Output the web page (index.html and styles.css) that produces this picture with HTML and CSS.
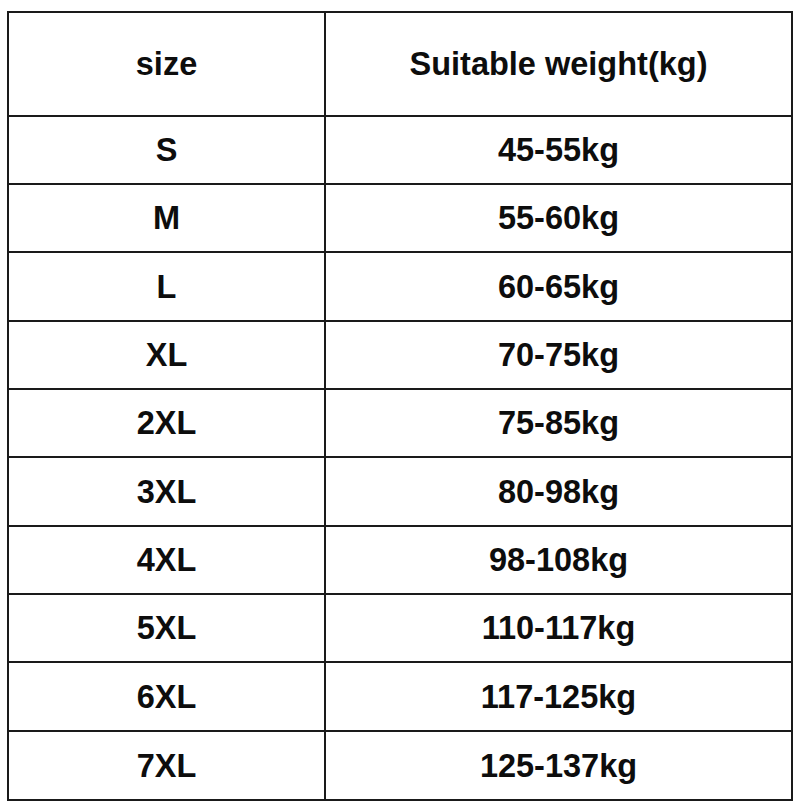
FILE: index.html
```html
<!DOCTYPE html>
<html>
<head>
<meta charset="utf-8">
<link rel="stylesheet" href="styles.css">
</head>
<body>
<div class="chart">
  <div class="cell head">size</div><div class="cell head">Suitable weight(kg)</div>
  <div class="cell">S</div><div class="cell">45-55kg</div>
  <div class="cell">M</div><div class="cell">55-60kg</div>
  <div class="cell">L</div><div class="cell">60-65kg</div>
  <div class="cell">XL</div><div class="cell">70-75kg</div>
  <div class="cell">2XL</div><div class="cell">75-85kg</div>
  <div class="cell">3XL</div><div class="cell">80-98kg</div>
  <div class="cell">4XL</div><div class="cell">98-108kg</div>
  <div class="cell">5XL</div><div class="cell">110-117kg</div>
  <div class="cell">6XL</div><div class="cell">117-125kg</div>
  <div class="cell">7XL</div><div class="cell">125-137kg</div>
</div>
</body>
</html>
```
FILE: styles.css
```css
html, body {
  margin: 0;
  padding: 0;
  background: #fff;
}
body {
  padding: 11px 0 0 7px;
}
.chart {
  width: 786px;
  box-sizing: border-box;
  display: grid;
  grid-template-columns: 317px 467px;
  grid-template-rows: 104px 68px 68px 69px 68px 68px 69px 68px 68px 69px 69px;
  border-top: 2px solid #1a1a1a;
  border-left: 2px solid #1a1a1a;
  font-family: "Liberation Sans", Arial, sans-serif;
  font-weight: bold;
  font-size: 32.5px;
  color: #0d0d0d;
}
.cell {
  border-right: 2px solid #1a1a1a;
  border-bottom: 2px solid #1a1a1a;
  display: flex;
  align-items: center;
  justify-content: center;
  line-height: 1;
  padding-top: 1px;
}
```
